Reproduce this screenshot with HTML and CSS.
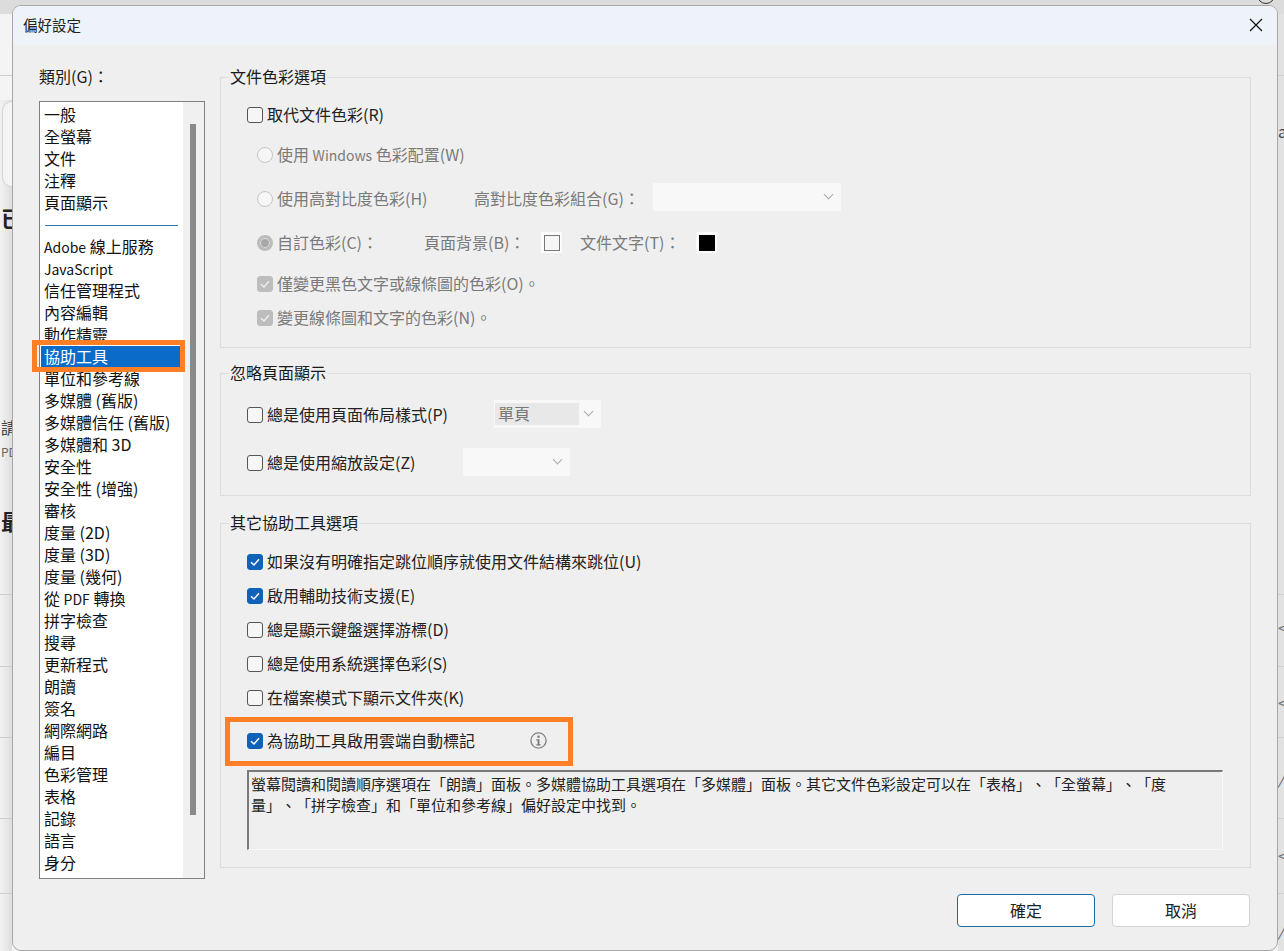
FILE: index.html
```html
<!DOCTYPE html>
<html>
<head>
	<title>偏好設定</title>
	<meta charset="utf-8">
	<link rel="stylesheet" href="styles.css">
</head>
<body>
<div class="desk">
	<div class="desk-top"></div>
	<div class="desk-left"></div>
	<div class="desk-right"></div>
	<div class="desk-card"></div>
	<div class="desk-line" style="top:75px"></div>
	<div class="desk-line" style="top:594px"></div>
	<div class="desk-line" style="top:666px"></div>
	<div class="desk-line" style="top:737px"></div>
	<div class="desk-line" style="top:818px"></div>
	<div class="desk-line" style="top:893px"></div>
	<span class="scrap scrap-big" style="top:204px">已</span>
	<span class="scrap" style="top:416px">請</span>
	<span class="scrap scrap-small" style="top:444px">PDF</span>
	<span class="scrap scrap-big" style="top:507px">最</span>
	<span class="scrap-r" style="top:120px">a</span>
	<span class="scrap-r chev" style="top:616px">&lt;</span>
	<span class="scrap-r chev" style="top:691px">&lt;</span>
	<span class="scrap-r slash" style="top:767px">/</span>
	<span class="scrap-r chev" style="top:844px">&lt;</span>
	<span class="scrap-r slash" style="top:919px">/</span>
	<div class="desk-ring"></div>
</div>

<div class="dialog">
	<div class="titlebar">
		<span class="title">偏好設定</span>
		<svg class="close" width="14" height="14" viewBox="0 0 14 14"><path d="M1 1L13 13M13 1L1 13" stroke="#111" stroke-width="1.2" fill="none"/></svg>
	</div>
	<div class="content">
		<div class="left">
			<div class="cat-label">類別(G)：</div>
			<div class="list">
				<ul class="items">
					<li>一般</li>
					<li>全螢幕</li>
					<li>文件</li>
					<li>注釋</li>
					<li>頁面顯示</li>
					<li class="sep"></li>
					<li><span class="la">Adobe</span> 線上服務</li>
					<li><span class="la">JavaScript</span></li>
					<li>信任管理程式</li>
					<li>內容編輯</li>
					<li>動作精靈</li>
					<li class="active">協助工具</li>
					<li>單位和參考線</li>
					<li>多媒體 (舊版)</li>
					<li>多媒體信任 (舊版)</li>
					<li>多媒體和 3D</li>
					<li>安全性</li>
					<li>安全性 (增強)</li>
					<li>審核</li>
					<li>度量 (2D)</li>
					<li>度量 (3D)</li>
					<li>度量 (幾何)</li>
					<li>從 <span class="la">PDF</span> 轉換</li>
					<li>拼字檢查</li>
					<li>搜尋</li>
					<li>更新程式</li>
					<li>朗讀</li>
					<li>簽名</li>
					<li>網際網路</li>
					<li>編目</li>
					<li>色彩管理</li>
					<li>表格</li>
					<li>記錄</li>
					<li>語言</li>
					<li>身分</li>
				</ul>
				<div class="scroll"><div class="thumb"></div></div>
			</div>
		</div>

		<div class="right">
			<fieldset class="box box1">
				<legend>文件色彩選項</legend>
				<div class="row"><span class="check"></span>取代文件色彩(R)</div>
				<div class="row sub off gap40"><span class="radio"></span><span>使用 <span class="la">Windows</span> 色彩配置(W)</span></div>
				<div class="row sub off gap44">
					<span class="radio"></span><span class="w197">使用高對比度色彩(H)</span>
					<span class="w179">高對比度色彩組合(G)：</span>
					<span class="select w188"><i class="chev-down"></i></span>
				</div>
				<div class="row sub off gap44">
					<span class="radio on"></span><span class="w147">自訂色彩(C)：</span>
					<span class="w117">頁面背景(B)：</span>
					<span class="swatch"><b class="white"></b></span>
					<span class="w116 ml18">文件文字(T)：</span>
					<span class="swatch"><b class="black"></b></span>
				</div>
				<div class="row sub off gap41"><span class="check dim"><svg width="16" height="16" viewBox="0 0 16 16"><path d="M4 8.2L7 11L12 5.2" stroke="#eee" stroke-width="1.4" fill="none"/></svg></span>僅變更黑色文字或線條圖的色彩(O)。</div>
				<div class="row sub off gap34"><span class="check dim"><svg width="16" height="16" viewBox="0 0 16 16"><path d="M4 8.2L7 11L12 5.2" stroke="#eee" stroke-width="1.4" fill="none"/></svg></span>變更線條圖和文字的色彩(N)。</div>
			</fieldset>

			<fieldset class="box box2">
				<legend>忽略頁面顯示</legend>
				<div class="row">
					<span class="check"></span><span class="w227">總是使用頁面佈局樣式(P)</span>
					<span class="select w107"><em>單頁</em><i class="chev-down"></i></span>
				</div>
				<div class="row gap48">
					<span class="check"></span><span class="w195">總是使用縮放設定(Z)</span>
					<span class="select w107"><i class="chev-down"></i></span>
				</div>
			</fieldset>

			<fieldset class="box box3">
				<legend>其它協助工具選項</legend>
				<div class="row"><span class="check on"><svg width="16" height="16" viewBox="0 0 16 16"><path d="M4 8.2L7 11L12 5.2" stroke="#fff" stroke-width="1.4" fill="none"/></svg></span>如果沒有明確指定跳位順序就使用文件結構來跳位(U)</div>
				<div class="row gap34"><span class="check on"><svg width="16" height="16" viewBox="0 0 16 16"><path d="M4 8.2L7 11L12 5.2" stroke="#fff" stroke-width="1.4" fill="none"/></svg></span>啟用輔助技術支援(E)</div>
				<div class="row gap34"><span class="check"></span>總是顯示鍵盤選擇游標(D)</div>
				<div class="row gap34"><span class="check"></span>總是使用系統選擇色彩(S)</div>
				<div class="row gap34"><span class="check"></span>在檔案模式下顯示文件夾(K)</div>
				<div class="row gap43">
					<span class="check on"><svg width="16" height="16" viewBox="0 0 16 16"><path d="M4 8.2L7 11L12 5.2" stroke="#fff" stroke-width="1.4" fill="none"/></svg></span><span class="w263">為協助工具啟用雲端自動標記</span>
					<svg class="info" width="17" height="17" viewBox="0 0 17 17"><circle cx="8.5" cy="8.5" r="7.6" stroke="#858585" stroke-width="1.4" fill="none"/><rect x="7.4" y="3.6" width="2.2" height="2.2" fill="#777"/><path d="M6.4 7.3H9.4V12.3H10.6V13.4H6.4V12.3H7.6V8.4H6.4Z" fill="#777"/></svg>
				</div>
				<div class="desc">螢幕閱讀和閱讀順序選項在「朗讀」面板。多媒體協助工具選項在「多媒體」面板。其它文件色彩設定可以在「表格」、「全螢幕」、「度量」、「拼字檢查」和「單位和參考線」偏好設定中找到。</div>
			</fieldset>

			<div class="buttons">
				<button class="btn primary">確定</button>
				<button class="btn">取消</button>
			</div>
		</div>
	</div>
</div>

<div class="mark mark-list"></div>
<div class="mark mark-row"></div>
</body>
</html>
```

FILE: styles.css
```css
*{
	padding: 0;
	margin: 0;
	box-sizing: border-box;
}
html, body{
	width: 1284px;
	height: 951px;
	overflow: hidden;
}
body{
	background: #f4f4f4;
	font-family: "Noto Sans CJK TC", "Liberation Sans", sans-serif;
	font-size: 16px;
	color: #1a1a1a;
	position: relative;
	text-spacing-trim: space-all;
}
.la{
	font-size: 14px;
}

/* app behind the dialog */
.desk-top{
	position: absolute;
	left: 0;
	top: 0;
	width: 1284px;
	height: 14px;
	background: #dcdcdc;
}
.desk-left{
	position: absolute;
	left: 0;
	top: 100px;
	width: 12px;
	height: 851px;
	background: linear-gradient(to right, #f2f2f2, #dedede);
}
.desk-right{
	position: absolute;
	right: 0;
	top: 14px;
	width: 6px;
	height: 937px;
	background: #e2e2e2;
}
.desk-card{
	position: absolute;
	left: 2px;
	top: 101px;
	width: 30px;
	height: 86px;
	border: 1px solid #d4d4d4;
	border-radius: 10px;
	background: #f4f4f4;
}
.desk-line{
	position: absolute;
	left: 0;
	width: 1284px;
	height: 1px;
	background: #cfcfcf;
}
.scrap{
	position: absolute;
	left: 1px;
	font-size: 16px;
	line-height: 22px;
	color: #444;
}
.scrap-big{
	font-size: 22px;
	line-height: 26px;
	font-weight: 700;
	color: #222;
}
.scrap-small{
	left: 1px;
	font-size: 12px;
	line-height: 16px;
	color: #666;
}
.scrap-r{
	position: absolute;
	left: 1278px;
	font-size: 16px;
	line-height: 22px;
	color: #444;
}
.chev{
	color: #777;
}
.slash{
	color: #667;
	font-style: italic;
}
.desk-ring{
	position: absolute;
	left: 1257px;
	top: -14px;
	width: 18px;
	height: 18px;
	border: 1.5px solid #333;
	border-radius: 50%;
}

/* dialog */
.dialog{
	position: absolute;
	left: 12px;
	top: 5px;
	width: 1266px;
	height: 946px;
	background: #efefef;
	border: 1px solid #a8a8a8;
	border-radius: 9px;
	overflow: hidden;
}
.titlebar{
	height: 39px;
	background: #eef2f9;
	display: flex;
	align-items: center;
	justify-content: space-between;
	padding: 0 14px 0 10px;
}
.title{
	font-size: 14.5px;
	color: #222;
	margin-bottom: 3px;
}
.close{
	margin-bottom: 2px;
}
.content{
	display: flex;
	gap: 15px;
	padding: 21px 0 0 26px;
}
.left{
	width: 166px;
}
.cat-label{
	height: 22px;
	line-height: 20px;
	margin-bottom: 13px;
}
.list{
	height: 778px;
	border: 1px solid #808080;
	background: #fff;
	display: flex;
}
.items{
	flex: 1;
	list-style: none;
	padding: 2px 2px 0 1px;
}
.items li{
	height: 22px;
	line-height: 20px;
	padding-left: 3px;
	white-space: nowrap;
	color: #111;
}
.items .sep{
	display: flex;
	align-items: center;
	padding: 0 3px 0 4px;
}
.items .sep::after{
	content: "";
	display: block;
	width: 133px;
	height: 1px;
	background: #2a7ab0;
}
.items .active{
	background: #0a6cc8;
	color: #fff;
}
.scroll{
	width: 21px;
	background: #f0f0f0;
	padding: 22px 8px 0 7px;
}
.thumb{
	height: 691px;
	background: #8a8a8a;
}

/* right side */
.right{
	width: 1031px;
}
.box{
	border: 1px solid #dcdcdc;
	display: block;
	min-width: 0;
}
.box legend{
	margin-left: -18px;
	padding: 0 1px;
	line-height: 20px;
	height: 22px;
}
.box1{
	height: 282px;
	padding: 16px 0 0 26px;
}
.box2{
	height: 134px;
	margin-top: 14px;
	padding: 20px 0 0 26px;
}
.box3{
	height: 356px;
	margin-top: 16px;
	padding: 17px 0 0 26px;
}
.row{
	height: 22px;
	line-height: 20px;
	display: flex;
	align-items: flex-start;
	white-space: nowrap;
	color: #222;
}
.sub{
	padding-left: 10px;
}
.off{
	color: #7a7a7a;
}
.gap34{ margin-top: 12px; }
.gap40{ margin-top: 18px; }
.gap41{ margin-top: 19px; }
.gap43{ margin-top: 21px; }
.gap44{ margin-top: 22px; }
.gap48{ margin-top: 26px; }
.w116{ width: 116px; }
.w117{ width: 117px; }
.w147{ width: 147px; }
.w179{ width: 179px; }
.w195{ width: 196px; }
.w197{ width: 197px; }
.w227{ width: 227px; }
.w263{ width: 263px; }
.ml18{ margin-left: 18px; }

.check{
	flex: none;
	width: 16px;
	height: 16px;
	margin: 3px 4px 0 0;
	border: 1px solid #555;
	border-radius: 3px;
	background: #f6f6f6;
}
.check svg{
	display: block;
	margin: -1px;
}
.check.on{
	background: #0f62b8;
	border-color: #0f62b8;
}
.check.dim{
	background: #bdbdbd;
	border-color: #bdbdbd;
}
.radio{
	flex: none;
	width: 16px;
	height: 16px;
	margin: 3px 4px 0 0;
	border: 1px solid #c6c6c6;
	border-radius: 50%;
	background: #f6f6f6;
}
.radio.on{
	border: 3px solid #bcbcbc;
	background: #a8a8a8;
	box-shadow: inset 0 0 0 1px #e4e4e4;
}
.select{
	flex: none;
	height: 28px;
	margin-top: -4px;
	background: #f8f8f8;
	display: flex;
	align-items: center;
	position: relative;
}
.box1 .select{
	margin-top: -5px;
}
.w188{ width: 188px; }
.w107{ width: 107px; }
.select em{
	width: 84px;
	height: 22px;
	line-height: 20px;
	padding-left: 3px;
	background: #e8e8e8;
	font-style: normal;
	color: #777;
	margin-left: 1px;
}
.chev-down{
	position: absolute;
	right: 9px;
	top: 8px;
	width: 7px;
	height: 7px;
	border-right: 1px solid #aaa;
	border-bottom: 1px solid #aaa;
	transform: rotate(45deg);
}
.swatch{
	flex: none;
	width: 21px;
	height: 21px;
	background: #fbfbfb;
	display: flex;
	align-items: center;
	justify-content: center;
}
.swatch b{
	display: block;
	width: 16px;
	height: 16px;
}
.white{
	background: #f6f6f6;
	border: 1px solid #777;
}
.black{
	background: #000;
}
.info{
	margin-top: 2px;
}
.desc{
	width: 976px;
	height: 80px;
	margin-top: 18px;
	padding: 1px 50px 0 2px;
	font-size: 15px;
	line-height: 21px;
	color: #222;
	border-top: 2px solid #7a7a7a;
	border-left: 2px solid #7a7a7a;
	border-right: 1px solid #f8f8f8;
	border-bottom: 1px solid #f8f8f8;
}
.buttons{
	display: flex;
	justify-content: flex-end;
	gap: 17px;
	margin-top: 26px;
	padding-right: 1px;
}
.btn{
	width: 138px;
	height: 33px;
	padding-bottom: 2px;
	background: #fff;
	border: 1px solid #d4d4d4;
	border-radius: 4px;
	font-family: inherit;
	font-size: 16px;
	color: #222;
}
.primary{
	border-color: #1a6aa8;
}

/* orange highlights on top of the screenshot */
.mark{
	position: absolute;
	border: 5px solid #ff7f27;
}
.mark-list{
	left: 32px;
	top: 340px;
	width: 153px;
	height: 32px;
}
.mark-row{
	left: 225px;
	top: 717px;
	width: 348px;
	height: 49px;
}
```
